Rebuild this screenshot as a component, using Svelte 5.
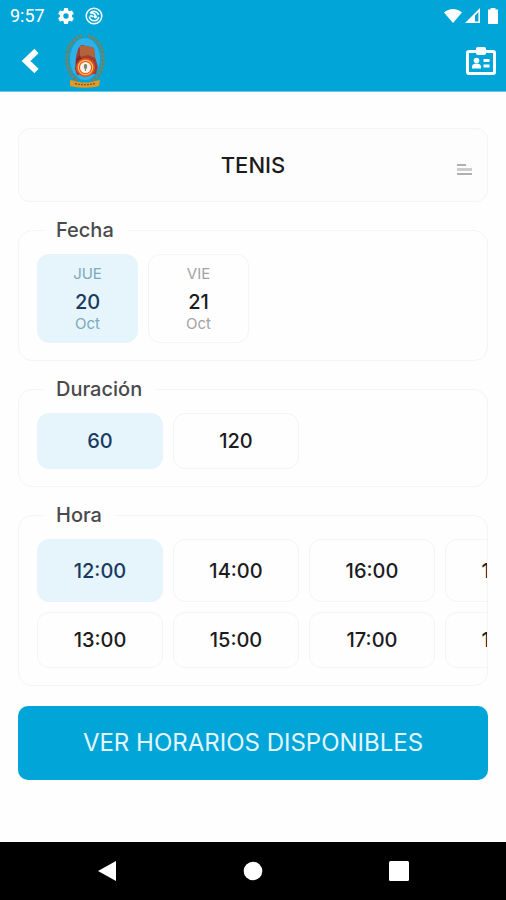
<script lang="ts">
  const sports = ['TENIS', 'PADEL', 'FUTBOL'];
  const days = [
    { weekday: 'JUE', day: '20', month: 'Oct' },
    { weekday: 'VIE', day: '21', month: 'Oct' }
  ];
  const durations = ['60', '120'];
  const hours = ['12:00', '13:00', '14:00', '15:00', '16:00', '17:00', '18:00', '19:00'];

  let sport = $state('TENIS');
  let day = $state('20');
  let duration = $state('60');
  let hour = $state('12:00');
</script>

<div class="screen">
  <header>
    <div class="status-bar">
      <span class="clock">9:57</span>
      <svg class="gear" width="20" height="20" viewBox="0 0 24 24" aria-hidden="true">
        <path fill="currentColor" d="M19.14 12.94c.04-.3.06-.61.06-.94s-.02-.64-.07-.94l2.03-1.58a.49.49 0 0 0 .12-.61l-1.92-3.32a.49.49 0 0 0-.59-.22l-2.39.96a7 7 0 0 0-1.62-.94l-.36-2.54a.48.48 0 0 0-.48-.41h-3.84a.48.48 0 0 0-.47.41l-.36 2.54c-.59.24-1.13.57-1.62.94l-2.39-.96a.48.48 0 0 0-.59.22L2.74 8.87a.48.48 0 0 0 .12.61l2.03 1.58c-.05.3-.09.63-.09.94s.02.64.07.94l-2.03 1.58a.49.49 0 0 0-.12.61l1.92 3.32c.12.22.37.29.59.22l2.39-.96c.5.38 1.03.7 1.62.94l.36 2.54c.05.24.24.41.48.41h3.84c.24 0 .44-.17.47-.41l.36-2.54a7 7 0 0 0 1.62-.94l2.39.96c.22.08.47 0 .59-.22l1.92-3.32a.48.48 0 0 0-.12-.61zM12 15.2a3.2 3.2 0 1 1 0-6.4 3.2 3.2 0 0 1 0 6.4z" />
      </svg>
      <svg width="18" height="18" viewBox="0 0 18 18" fill="none" stroke="currentColor" aria-hidden="true">
        <circle cx="9" cy="9" r="7.8" stroke-width="1.5" />
        <path stroke-width="1.5" d="M5.200 6.200A4.700 4.700 0 0 1 13.500 8M13.700 9.800A4.700 4.700 0 0 1 4.400 9.500" />
        <path stroke-width="1.800" d="M5.400 6.200c2.200-.6 4 .2 4.800 1.800M5 9c1.500-.4 2.600 0 3.200 1" />
        <circle cx="10.300" cy="9.800" r="1.700" fill="currentColor" stroke="none" />
      </svg>
      <svg class="signals" width="54" height="18" viewBox="0 0 54 18" fill="currentColor" aria-hidden="true">
        <path d="M0 5.4C5 .7 13 .7 18 5.4L9 16z" />
        <path fill-rule="evenodd" d="M36 1v15H21zM34.4 5v9.4H31V8.6z" />
        <path d="M46.600 2.600V1h4.800v1.600H54V17H44V2.600z" />
      </svg>
    </div>

    <div class="app-bar">
      <button class="icon-button" aria-label="Volver">
        <svg width="18" height="26" viewBox="0 0 18 26" fill="none" stroke="#fff" stroke-width="6">
          <path d="M15.500 3L5 13l10.500 10" />
        </svg>
      </button>
      <svg class="crest" width="40" height="54" viewBox="0 0 40 54" role="img" aria-label="Escudo del club">
        <ellipse cx="20" cy="25" rx="15" ry="21" fill="#2fb0e8" />
        <g fill="none" stroke-width="3.200">
          <path d="M17 2C8 4 2 13 2 25c0 10 4 18 11 22M23 2c9 2 15 11 15 23 0 10-4 18-11 22" stroke="#3f8f93" />
          <path d="M17 2C8 4 2 13 2 25c0 10 4 18 11 22M23 2c9 2 15 11 15 23 0 10-4 18-11 22" stroke="#7f8460" stroke-dasharray="1.500 2.500" />
        </g>
        <path d="M10 35l1-12 2-8 3-4 6 1 7 2 1 9 3 10-2 7-19 1z" fill="#9c3f30" />
        <path d="M15 12l7 0 7 2 1 10-7-3-8 2z" fill="#b4633d" />
        <path d="M11 25l4-4 2 5-6 9z" fill="#7d2d2d" />
        <circle cx="20.500" cy="33.500" r="9.500" fill="#e4501f" />
        <circle cx="20.500" cy="33.500" r="7.200" fill="none" stroke="#ffc45a" stroke-width="1.200" />
        <circle cx="20.500" cy="33.500" r="5.500" fill="#f9f4e5" />
        <path d="M20.500 30v7M19.500 31h2v3h-2z" stroke="#7b8770" stroke-width="1.200" fill="#7b8770" />
        <path d="M5 46l5 1c7 2 13 2 20 0l5-1-1 6-4 1c-7 1-14 1-20 0l-5-1z" fill="#e39a25" />
        <path d="M10 49.500c7 1.500 13 1.500 20 0" fill="none" stroke="#955025" stroke-width="1.400" stroke-dasharray="2 1" />
      </svg>
      <button class="icon-button credential" aria-label="Credencial">
        <svg width="30" height="28" viewBox="0 0 30 28">
          <rect x="1.500" y="4.500" width="27" height="22" rx="1.500" fill="none" stroke="#fff" stroke-width="3" />
          <rect x="10" y="0" width="10" height="8" rx="2" fill="#fff" />
          <g fill="#fff">
            <circle cx="10.500" cy="13.500" r="2.800" />
            <path d="M6 21.500v-2c0-2 2-3 4.500-3s4.500 1 4.500 3v2z" />
            <rect x="17.500" y="12" width="6" height="3" />
            <rect x="17.500" y="17.500" width="6" height="3" />
          </g>
        </svg>
      </button>
    </div>
  </header>

  <main>
    <div class="sport">
      <select aria-label="Deporte" bind:value={sport}>
        {#each sports as name}
          <option value={name}>{name}</option>
        {/each}
      </select>
      <svg width="15" height="12" viewBox="0 0 15 12" fill="#b0b0b0" aria-hidden="true">
        <rect width="9" height="2" />
        <rect y="4" width="15" height="3" fill="#cdcdcd" />
        <rect y="9" width="15" height="2" />
      </svg>
    </div>

    <fieldset>
      <legend>Fecha</legend>
      <div class="options">
        {#each days as item}
          <label class="option date">
            <input type="radio" name="day" value={item.day} bind:group={day} />
            <span class="small">{item.weekday}</span>
            <span class="number">{item.day}</span>
            <span class="small">{item.month}</span>
          </label>
        {/each}
      </div>
    </fieldset>

    <fieldset>
      <legend>Duración</legend>
      <div class="options">
        {#each durations as item}
          <label class="option">
            <input type="radio" name="duration" value={item} bind:group={duration} />
            {item}
          </label>
        {/each}
      </div>
    </fieldset>

    <fieldset>
      <legend>Hora</legend>
      <div class="hours">
        {#each hours as item}
          <label class="option">
            <input type="radio" name="hour" value={item} bind:group={hour} />
            {item}
          </label>
        {/each}
      </div>
    </fieldset>

    <button class="submit">VER HORARIOS DISPONIBLES</button>
  </main>

  <nav>
    <button aria-label="Atrás">
      <svg width="20" height="22" viewBox="0 0 20 22"><path fill="#fff" d="M19 1v20L1 11z" /></svg>
    </button>
    <button aria-label="Inicio">
      <svg width="20" height="22" viewBox="0 0 20 22"><circle cx="10" cy="11" r="9.300" fill="#fff" /></svg>
    </button>
    <button aria-label="Recientes">
      <svg width="20" height="22" viewBox="0 0 20 22"><rect y="1" width="20" height="20" rx="1.500" fill="#fff" /></svg>
    </button>
  </nav>
</div>

<style>
  :global(body) {
    margin: 0;
    background: #fefefe;
  }

  .screen {
    --blue: #02a5d8;
    --line: #f4f4f5;
    display: flex;
    flex-direction: column;
    min-height: 100vh;
    font-family: Inter, 'Open Sans', sans-serif;
    color: #1c1c1e;
  }

  button {
    padding: 0;
    border: 0;
    background: none;
    font: inherit;
    color: inherit;
    cursor: pointer;
  }

  svg {
    display: block;
  }

  header {
    background: var(--blue);
    color: #fff;
    border-bottom: 1px solid #6cc9e6;
  }

  .status-bar {
    display: flex;
    align-items: center;
    height: 31px;
    padding: 0 8px 0 10px;
  }

  .clock {
    font-family: Roboto, sans-serif;
    font-size: 18px;
    line-height: 32px;
  }

  .gear {
    margin: 0 9px 0 11px;
  }

  .signals {
    margin-left: auto;
  }

  .app-bar {
    display: flex;
    align-items: center;
    height: 60px;
    padding: 0 10px 0 21px;
  }

  .crest {
    margin-left: 26px;
  }

  .credential {
    margin-left: auto;
  }

  main {
    display: flex;
    flex-direction: column;
    gap: 16px;
    padding: 36px 18px 20px;
  }

  .sport {
    position: relative;
  }

  .sport select {
    width: 100%;
    height: 74px;
    padding: 0;
    border: 1px solid var(--line);
    border-radius: 12px;
    background: #fdfdfd;
    appearance: none;
    font: 500 22px/28px Inter, sans-serif;
    color: #1c1c1e;
    text-align: center;
    text-align-last: center;
  }

  .sport svg {
    position: absolute;
    right: 16px;
    top: 36px;
    pointer-events: none;
  }

  fieldset {
    min-width: 0;
    margin: 0;
    padding: 12px 0 17px 18px;
    border: 1px solid var(--line);
    border-radius: 14px;
  }

  legend {
    margin-left: 6px;
    padding: 0 13px;
    font-size: 20px;
    font-weight: 500;
    line-height: 24px;
    color: #4a4a4c;
  }

  .options {
    display: flex;
    gap: 10px;
  }

  .hours {
    display: grid;
    grid-template-rows: 63px 56px;
    grid-auto-flow: column;
    grid-auto-columns: 126px;
    gap: 10px;
    overflow-x: auto;
    scrollbar-width: none;
  }

  .option {
    position: relative;
    box-sizing: border-box;
    display: flex;
    align-items: center;
    justify-content: center;
    width: 126px;
    min-height: 56px;
    border: 1px solid var(--line);
    border-radius: 12px;
    font-size: 20px;
    font-weight: 500;
    line-height: 24px;
    cursor: pointer;
  }

  .option input {
    position: absolute;
    inset: 0;
    margin: 0;
    opacity: 0;
    cursor: pointer;
  }

  .option:has(input:checked) {
    border-color: #e6f5fb;
    background: #e6f5fb;
    color: #1b3a63;
  }

  .option:has(input:focus-visible) {
    outline: 2px solid var(--blue);
  }

  .date {
    flex-direction: column;
    width: 101px;
    padding: 9px 0 8px;
  }

  .small {
    font-size: 15px;
    font-weight: 400;
    line-height: 20px;
    color: #a3a3a5;
  }

  .date:has(input:checked) .small {
    color: #7ba9bb;
  }

  .number {
    margin-top: 6px;
  }

  .submit {
    height: 74px;
    margin-top: 4px;
    border-radius: 10px;
    background: var(--blue);
    font-size: 24px;
    line-height: 28px;
    color: #e4f7fe;
  }

  nav {
    display: flex;
    align-items: center;
    justify-content: space-around;
    height: 58px;
    margin-top: auto;
    padding: 0 34px;
    background: #000;
  }
</style>
